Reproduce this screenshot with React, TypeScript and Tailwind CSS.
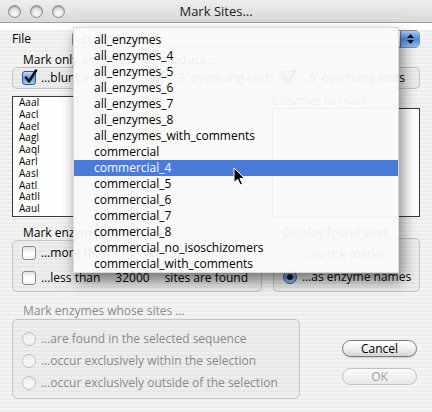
import React from "react";

const font = "font-['Open_Sans','DejaVu_Sans',sans-serif]";

function Check({ checked = false, dim = false }: { checked?: boolean; dim?: boolean }) {
  return (
    <div
      className={
        "relative w-[14px] h-[14px] shrink-0 rounded-[3px] border " +
        (checked
          ? "border-[#35589a] bg-gradient-to-b from-[#c4ddfb] via-[#5f9cec] to-[#a8cdf7]"
          : "border-[#8a8a8a] bg-gradient-to-b from-[#e2e2e2] via-white to-[#f4f4f4]") +
        (dim ? " opacity-60" : "")
      }
    >
      {checked && (
        <svg className="absolute left-[1px] top-[-3px]" width="14" height="15" viewBox="0 0 14 15">
          <path d="M2 8.5 L5 12.5 L12 1.5" fill="none" stroke="#111" strokeWidth="2.6" strokeLinecap="round" strokeLinejoin="round" />
        </svg>
      )}
    </div>
  );
}

function Radio({ on = false, dim = false }: { on?: boolean; dim?: boolean }) {
  return (
    <div
      className={
        "relative w-[14px] h-[14px] shrink-0 rounded-full border flex items-center justify-center " +
        (on
          ? "border-[#35589a] bg-gradient-to-b from-[#c4ddfb] via-[#5f9cec] to-[#a8cdf7]"
          : "border-[#a0a0a0] bg-gradient-to-b from-[#e6e6e6] via-white to-[#f6f6f6]") +
        (dim ? " opacity-60" : "")
      }
    >
      {on && <div className="w-[6px] h-[6px] rounded-full bg-[#1a1a1a]" />}
    </div>
  );
}

function Light() {
  return (
    <div className="w-[13px] h-[13px] rounded-full border border-[#8c8c8c] bg-[radial-gradient(circle_at_50%_70%,#ffffff_0%,#e4e4e4_45%,#b8b8b8_100%)] shadow-[inset_0_1px_1px_rgba(0,0,0,0.25)]" />
  );
}

const menuItems = [
  "all_enzymes",
  "all_enzymes_4",
  "all_enzymes_5",
  "all_enzymes_6",
  "all_enzymes_7",
  "all_enzymes_8",
  "all_enzymes_with_comments",
  "commercial",
  "commercial_4",
  "commercial_5",
  "commercial_6",
  "commercial_7",
  "commercial_8",
  "commercial_no_isoschizomers",
  "commercial_with_comments",
];

const enzymes = ["AaaI", "AacI", "AaeI", "AagI", "AaqI", "AarI", "AasI", "AatI", "AatII", "AauI"];

const box = "rounded-[5px] border border-[#c4c4c4] bg-[rgba(0,0,0,0.025)]";

export default function App() {
  return (
    <div className={"relative w-[432px] h-[412px] overflow-hidden text-[12px] text-black " + font}>
      {/* Title bar */}
      <div className="relative h-[23px] flex items-center border-b border-[#a2a2a2] bg-gradient-to-b from-[#eeeeee] to-[#d9d9d9]">
        <div className="flex gap-[9px] ml-[8px]">
          <Light />
          <Light />
          <Light />
        </div>
        <div className="absolute inset-0 flex items-center justify-center text-[13px] text-[#222] pt-[1px]">
          Mark Sites…
        </div>
      </div>

      {/* Body */}
      <div className="h-[389px] px-[12px] bg-[repeating-linear-gradient(180deg,#ededed_0px,#ededed_2px,#f4f4f4_2px,#f4f4f4_4px)]">
        {/* File row */}
        <div className="flex items-center h-[18px] mt-[7px]">
          <div className="w-[60px]">File</div>
          <div className="flex-1 h-[18px] flex rounded-[5px] border border-[#8a8a8a] overflow-hidden bg-gradient-to-b from-white to-[#e6e6e6]">
            <div className="flex-1 pl-[9px] leading-[16px]">commercial_4</div>
            <div className="w-[19px] flex flex-col items-center justify-center gap-[2px] border-l border-[#4a6fae] bg-gradient-to-b from-[#a9cdf8] via-[#4c8ae6] to-[#8fc0f6]">
              <svg width="7" height="4" viewBox="0 0 7 4"><path d="M0 4 L3.5 0 L7 4 Z" fill="#111" /></svg>
              <svg width="7" height="4" viewBox="0 0 7 4"><path d="M0 0 L3.5 4 L7 0 Z" fill="#111" /></svg>
            </div>
          </div>
        </div>

        {/* Mark only */}
        <div className="mt-[5px] h-[14px] leading-[14px] pl-[11px]">Mark only enzymes that produce ...</div>
        <div className={"h-[22px] flex items-center " + box}>
          <div className="flex items-center gap-[5px] ml-[9px] w-[128px]">
            <Check checked />
            <span>…blunt ends</span>
          </div>
          <div className="flex items-center gap-[5px] w-[131px]">
            <Check checked />
            <span>…3' overhang ends</span>
          </div>
          <div className="flex items-center gap-[5px]">
            <Check checked />
            <span>…5' overhang ends</span>
          </div>
        </div>

        {/* Lists */}
        <div className="flex mt-[7px] h-[121px]">
          <div className="w-[66px] h-[121px] border border-[#3a3a3a] bg-white pl-[6px] text-[10px] leading-[11.8px]">
            {enzymes.map((e) => (
              <div key={e}>{e}</div>
            ))}
          </div>
          <div className="flex-1" />
          <div className="w-[148px] flex flex-col">
            <div className="h-[12px] leading-[10px] text-[#444]">Enzymes to mark:</div>
            <div className="flex-1 border border-[#3a3a3a] bg-white" />
          </div>
        </div>

        {/* Mark enzymes / Display */}
        <div className="flex mt-[8px]">
          <div className="w-[250px] flex flex-col">
            <div className="h-[15px] leading-[15px] pl-[11px]">Mark enzymes that cut …</div>
            <div className={"h-[52px] flex flex-col gap-[11px] pt-[5px] pl-[9px] " + box}>
              <div className="flex items-center gap-[5px] h-[14px]">
                <Check />
                <span>…more than</span>
                <span className="ml-[6px]">1</span>
                <span className="ml-[10px]">sites are found</span>
              </div>
              <div className="flex items-center gap-[5px] h-[14px]">
                <Check />
                <span>…less than</span>
                <span className="ml-[10px]">32000</span>
                <span className="ml-[10px]">sites are found</span>
              </div>
            </div>
          </div>
          <div className="flex-1" />
          <div className="w-[147px] flex flex-col">
            <div className="h-[13px] leading-[15px] pl-[10px]">Display found sites</div>
            <div className={"h-[54px] flex flex-col gap-[9px] pt-[8px] pl-[9px] " + box}>
              <div className="flex items-center gap-[5px] h-[14px]">
                <Radio />
                <span>…as tick marks</span>
              </div>
              <div className="flex items-center gap-[5px] h-[14px]">
                <Radio on />
                <span>…as enzyme names</span>
              </div>
            </div>
          </div>
        </div>

        {/* Whose sites + buttons */}
        <div className="flex mt-[15px]">
          <div className="w-[288px] flex flex-col text-[#8a8a8a]">
            <div className="h-[12px] leading-[8px] pl-[11px]">Mark enzymes whose sites …</div>
            <div className={"h-[80px] flex flex-col gap-[8px] pt-[12px] pl-[9px] " + box}>
              <div className="flex items-center gap-[5px] h-[14px]">
                <Radio dim />
                <span>…are found in the selected sequence</span>
              </div>
              <div className="flex items-center gap-[5px] h-[14px]">
                <Radio dim />
                <span>…occur exclusively within the selection</span>
              </div>
              <div className="flex items-center gap-[5px] h-[14px]">
                <Radio dim />
                <span>…occur exclusively outside of the selection</span>
              </div>
            </div>
          </div>
          <div className="flex-1" />
          <div className="w-[75px] mr-[3px] flex flex-col pt-[33px] gap-[11px]">
            <div className="h-[17px] rounded-full border border-[#7a7a7a] bg-gradient-to-b from-white via-[#f0f0f0] to-[#d4d4d4] flex items-center justify-center leading-[15px] shadow-[0_1px_1px_rgba(0,0,0,0.15)]">
              Cancel
            </div>
            <div className="h-[17px] rounded-full border border-[#c0c0c0] bg-gradient-to-b from-[#fafafa] to-[#e8e8e8] flex items-center justify-center leading-[15px] text-[#a0a0a0]">
              OK
            </div>
          </div>
        </div>
      </div>

      {/* Popup menu overlay */}
      <div className="absolute left-[73px] top-[27px] w-[326px] h-[246px] pt-[4px] border border-[rgba(0,0,0,0.12)] bg-[rgba(250,250,250,0.95)] shadow-[3px_8px_14px_rgba(0,0,0,0.5)]">
        {menuItems.map((m, i) => (
          <div
            key={m}
            className={
              "h-[16px] leading-[16px] pl-[20px] " + (i === 8 ? "bg-[#4a7bd9] text-white" : "text-black")
            }
          >
            {m}
          </div>
        ))}
      </div>

      {/* Cursor */}
      <svg className="absolute left-[233px] top-[167px]" width="13" height="19" viewBox="0 0 13 19">
        <path d="M1 1 L1 15.5 L4.6 12.2 L7.2 17.8 L9.4 16.8 L6.9 11.4 L11.6 11.4 Z" fill="#000" stroke="#fff" strokeWidth="1" strokeLinejoin="round" />
      </svg>
    </div>
  );
}
